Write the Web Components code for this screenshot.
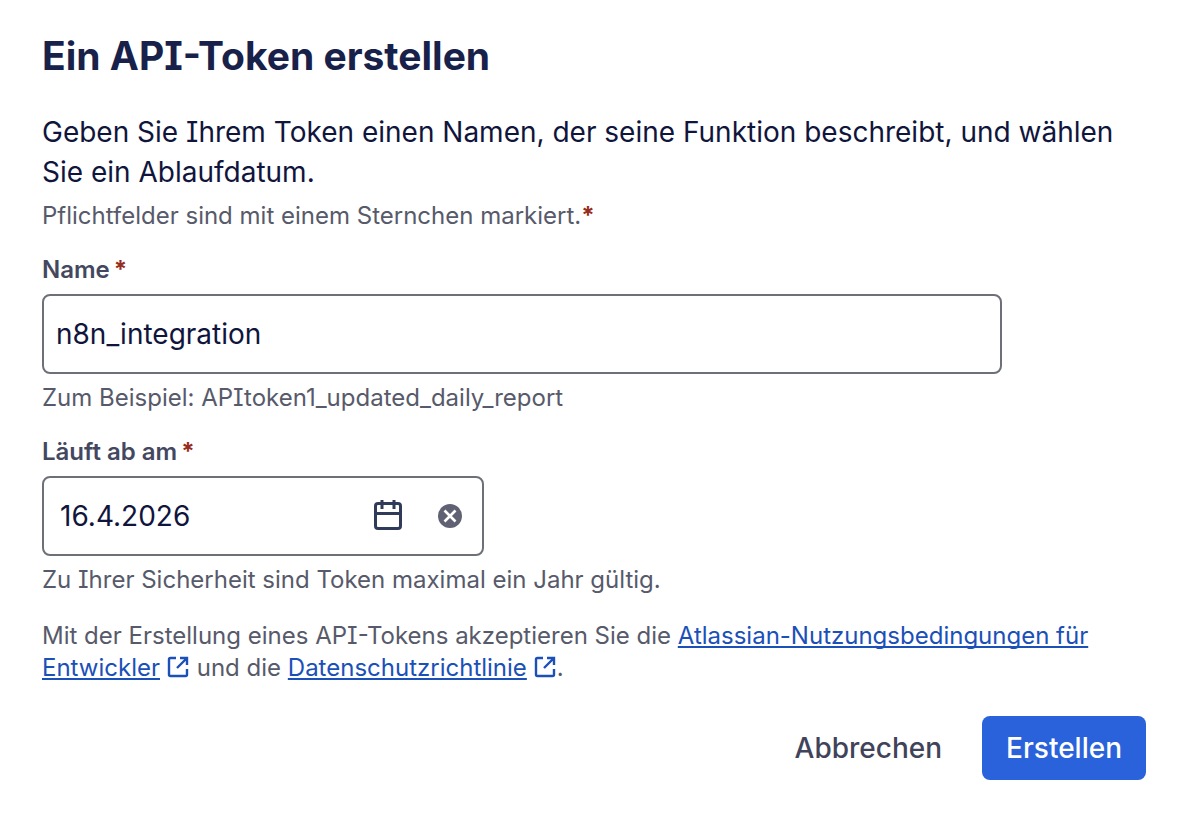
<!DOCTYPE html>
<html lang="de">
<head>
<meta charset="utf-8">
<meta name="viewport" content="width=device-width, initial-scale=1">
<title>Ein API-Token erstellen</title>
<style>
body { margin: 0; background: #fff; color: #10153c; font-family: Inter, "Liberation Sans", sans-serif; font-feature-settings: "cv08"; }
</style>
</head>
<body>
<token-dialog></token-dialog>
<script>
class BaseElement extends HTMLElement {
  constructor() {
    super();
    this.attachShadow({ mode: "open" }).innerHTML = this.render();
  }
}

customElements.define("required-mark", class extends BaseElement {
  render() {
    return `<style>:host { color: #962d20; font-weight: 700; }</style><slot>*</slot>`;
  }
});

customElements.define("external-link", class extends BaseElement {
  render() {
    return `<style>
      :host { display: inline; }
      a { color: #1a50b8; text-decoration: underline; text-decoration-thickness: 2px; text-underline-offset: 2px; text-decoration-skip-ink: none; }
      svg { width: 24px; height: 24px; vertical-align: -3px; color: #1a50b8; margin-left: 6px; }
    </style><a href="#"><slot></slot></a><svg viewBox="0 0 24 24" fill="none" stroke="currentColor" stroke-width="2.4" aria-hidden="true"><path d="M10 3H4.500Q3 3 3 4.500V19.500Q3 21 4.500 21H19.500Q21 21 21 19.500V14M14 3H21V10M21 3L11 13"/></svg>`;
  }
});

customElements.define("field-message", class extends BaseElement {
  render() {
    return `<style>:host { display: block; font-size: 24px; line-height: 32px; color: #575a6a; }</style><slot></slot>`;
  }
});

customElements.define("text-field", class extends HTMLElement {
  connectedCallback() {
    this.attachShadow({ mode: "open" }).innerHTML = `<style>
      :host { display: block; }
      label { display: block; font-size: 24px; line-height: 32px; font-weight: 600; color: #434860; margin-bottom: 8px; }
      required-mark { margin-left: 4px; }
      input { display: block; box-sizing: border-box; width: 100%; max-width: 960px; height: 80px; padding: 0 12px; border: 2px solid #6e7079; border-radius: 8px; font: 28px/40px Inter, sans-serif; font-feature-settings: inherit; color: #10153c; background: #fff; outline: none; }
      field-message { margin-top: 8px; }
    </style>
    <label for="field">${this.getAttribute("label")}<required-mark></required-mark></label>
    <input id="field" type="text" required value="${this.getAttribute("value")}">
    <field-message>${this.getAttribute("hint")}</field-message>`;
  }
});

customElements.define("date-field", class extends HTMLElement {
  connectedCallback() {
    this.attachShadow({ mode: "open" }).innerHTML = `<style>
      :host { display: block; }
      label { display: block; font-size: 24px; line-height: 32px; font-weight: 600; color: #434860; margin-bottom: 8px; }
      required-mark { margin-left: 4px; }
      .box { display: flex; align-items: center; box-sizing: border-box; width: 100%; max-width: 442px; height: 80px; padding: 0 16px; border: 2px solid #6e7079; border-radius: 8px; background: #fff; }
      input { flex: 1; min-width: 0; padding: 0; border: 0; font: 28px/40px Inter, sans-serif; color: #10153c; background: none; outline: none; }
      button { display: flex; padding: 0; border: 0; background: none; color: #303a59; }
      .clear { margin: 0 4px 0 34px; color: #606273; }
      field-message { margin-top: 8px; }
    </style>
    <label for="field">${this.getAttribute("label")}<required-mark></required-mark></label>
    <div class="box">
      <input id="field" type="text" required value="${this.getAttribute("value")}">
      <button type="button" aria-label="Kalender öffnen"><svg width="32" height="32" viewBox="0 0 32 32" fill="none" stroke="currentColor" stroke-width="3" aria-hidden="true"><rect x="3.500" y="3.500" width="25" height="25" rx="2.500"/><path d="M3 13.500H29M10 0V9M22 0V9"/></svg></button>
      <button type="button" class="clear" aria-label="Datum löschen"><svg width="24" height="24" viewBox="0 0 24 24" aria-hidden="true"><circle cx="12" cy="12" r="12" fill="currentColor"/><path d="M6.500 6.500L17.500 17.500M17.500 6.500L6.500 17.500" stroke="#fff" stroke-width="2.600"/></svg></button>
    </div>
    <field-message>${this.getAttribute("hint")}</field-message>`;
  }
});

customElements.define("action-button", class extends BaseElement {
  render() {
    return `<style>
      :host { display: block; }
      button { height: 64px; padding: 0 24px; border: 0; border-radius: 8px; background: none; color: #3f445a; font: 500 28px/40px Inter, sans-serif; cursor: pointer; }
      :host([primary]) button { background: #2a62db; color: #fff; }
    </style><button type="button"><slot></slot></button>`;
  }
});

customElements.define("token-dialog", class extends BaseElement {
  render() {
    return `<style>
      :host { display: block; padding: 32px 38px 32px 42px; }
      h1 { margin: 0; font-size: 39px; line-height: 48px; font-weight: 700; color: #182149; }
      .intro { margin: 32px 0 8px; font-size: 28px; line-height: 40px; }
      text-field, date-field { margin-top: 22px; }
      .terms { margin: 24px 0 0; font-size: 24px; line-height: 32px; color: #575a6a; }
      footer { display: flex; justify-content: flex-end; gap: 16px; margin-top: 32px; }
    </style>
    <main>
      <h1>Ein API-Token erstellen</h1>
      <p class="intro">Geben Sie Ihrem Token einen Namen, der seine Funktion beschreibt, und wählen Sie ein Ablaufdatum.</p>
      <field-message>Pflichtfelder sind mit einem Sternchen markiert.<required-mark></required-mark></field-message>
      <text-field label="Name" value="n8n_integration" hint="Zum Beispiel: APItoken1_updated_daily_report"></text-field>
      <date-field label="Läuft ab am" value="16.4.2026" hint="Zu Ihrer Sicherheit sind Token maximal ein Jahr gültig."></date-field>
      <p class="terms">Mit der Erstellung eines API-Tokens akzeptieren Sie die <external-link>Atlassian-Nutzungsbedingungen für Entwickler</external-link> und die <external-link>Datenschutzrichtlinie</external-link>.</p>
      <footer><action-button>Abbrechen</action-button><action-button primary>Erstellen</action-button></footer>
    </main>`;
  }
});
</script>
</body>
</html>
